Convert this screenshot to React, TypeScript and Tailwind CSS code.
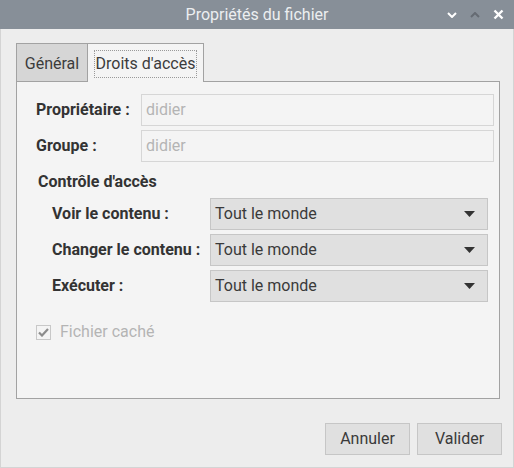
import React from "react";

const font = { fontFamily: "Roboto, 'Liberation Sans', sans-serif" };

function SelectBox({ value }: { value: string }) {
  return (
    <div className="flex h-[32px] w-[278px] items-center justify-between border border-[#c6c6c6] bg-[#e0e0e0] pl-[4px] pr-[12px] text-[16px] text-[#3a3a3a]">
      <span>{value}</span>
      <svg width="11" height="6" viewBox="0 0 11 6">
        <path d="M0 0 H11 L5.5 6 Z" fill="#333" />
      </svg>
    </div>
  );
}

function TextField({ value }: { value: string }) {
  return (
    <div className="flex h-[32px] w-[353px] items-center border border-[#d6d6d6] bg-[#f4f4f4] pl-[4px] text-[16px] text-[#b4b4b4]">
      {value}
    </div>
  );
}

export default function App() {
  const perms = [
    { label: "Voir le contenu :", value: "Tout le monde" },
    { label: "Changer le contenu :", value: "Tout le monde" },
    { label: "Exécuter :", value: "Tout le monde" },
  ];

  return (
    <div className="flex h-[468px] w-[514px] flex-col bg-[#ededed]" style={font}>
      {/* title bar */}
      <div className="relative flex h-[29px] items-center justify-center bg-[#878f98] text-[16px] text-[#eceef0]">
        <span>Propriétés du fichier</span>
        <div className="absolute right-[10px] top-0 flex h-full items-center gap-[13px]">
          <svg width="10" height="6" viewBox="0 0 10 6">
            <path d="M1 1 L5 5 L9 1" stroke="#ffffff" strokeWidth="2" fill="none" />
          </svg>
          <svg width="10" height="6" viewBox="0 0 10 6">
            <path d="M1 5 L5 1 L9 5" stroke="#656b73" strokeWidth="2" fill="none" />
          </svg>
          <svg width="11" height="11" viewBox="0 0 11 11">
            <path d="M1.5 1.5 L9.5 9.5 M9.5 1.5 L1.5 9.5" stroke="#ffffff" strokeWidth="2.4" fill="none" />
          </svg>
        </div>
      </div>

      <div className="flex flex-1 flex-col border-x border-b border-[#d4d4d4] pl-[15px] pr-[11px] pt-[14px]">
        {/* tabs */}
        <div className="flex h-[38px] items-stretch">
          <div className="flex w-[72px] items-center justify-center border border-b-0 border-[#a2a2a2] bg-[#d6d6d6] pt-[2px] text-[16px] text-[#3c3c3c]">
            Général
          </div>
          <div className="relative z-10 -mb-px flex w-[116px] items-center justify-center border border-l-0 border-b-0 border-[#a2a2a2] bg-[#f4f4f4] pt-[2px] text-[16px] text-[#3c3c3c]">
            <span className="border border-dotted border-[#9a9a9a] px-[1px] leading-[26px]">Droits d'accès</span>
          </div>
        </div>

        {/* panel */}
        <div className="flex h-[318px] w-[484px] flex-col border border-[#a2a2a2] bg-[#f4f4f4] pl-[19px] pr-[5px] pt-[12px]">
          <div className="flex flex-col gap-[4px]">
            <div className="flex items-center">
              <span className="w-[105px] text-[16px] font-bold text-[#333]">Propriétaire :</span>
              <TextField value="didier" />
            </div>
            <div className="flex items-center">
              <span className="w-[105px] text-[16px] font-bold text-[#333]">Groupe :</span>
              <TextField value="didier" />
            </div>
          </div>

          <div className="ml-[2px] mt-[8px] text-[16px] font-bold text-[#333]">Contrôle d'accès</div>

          <div className="mt-[4px] flex flex-col gap-[4px] pl-[16px]">
            {perms.map((p) => (
              <div key={p.label} className="flex items-center">
                <span className="w-[158px] text-[16px] font-bold text-[#333]">{p.label}</span>
                <SelectBox value={p.value} />
              </div>
            ))}
          </div>

          <div className="mt-[18px] flex items-center gap-[9px]">
            <div className="flex h-[15px] w-[15px] items-center justify-center border border-[#c8c8c8] bg-[#f4f4f4]">
              <svg width="11" height="9" viewBox="0 0 11 9">
                <path d="M1 4.5 L4 7.5 L10 1" stroke="#8c8c8c" strokeWidth="2.2" fill="none" />
              </svg>
            </div>
            <span className="text-[16px] text-[#b4b4b4]">Fichier caché</span>
          </div>
        </div>

        {/* buttons */}
        <div className="mt-[24px] flex justify-end gap-[7px]">
          <button className="h-[32px] w-[85px] border border-[#c6c6c6] bg-[#e0e0e0] text-[16px] text-[#3a3a3a]">
            Annuler
          </button>
          <button className="h-[32px] w-[85px] border border-[#c6c6c6] bg-[#e0e0e0] text-[16px] text-[#3a3a3a]">
            Valider
          </button>
        </div>
      </div>
    </div>
  );
}
